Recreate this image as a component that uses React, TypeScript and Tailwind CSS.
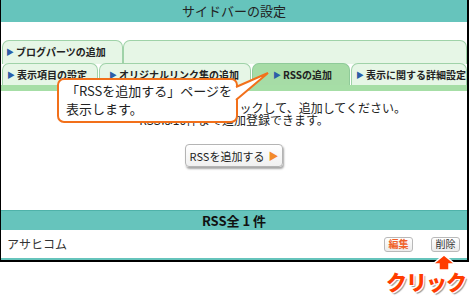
import React from 'react'

const FONT = '"Noto Sans CJK JP", "Noto Sans", sans-serif'

function Tab({ label, active, className = '' }: { label?: string; active?: boolean; className?: string }) {
  return (
    <div
      className={`flex items-center h-full rounded-t-[7px] border border-b-0 ${
        active ? 'bg-[#a6dca6] border-[#8fcb99]' : 'bg-[#e6f6e6] border-[#9fd2a8]'
      } ${className}`}
    >
      {label && (
        <span className="flex items-center text-[10px] font-bold text-[#222] leading-none pl-[3px] whitespace-nowrap">
          <span className="text-[#2b5ea8] text-[8px] mr-[2px]">▶</span>
          {label}
        </span>
      )}
    </div>
  )
}

function SmallBtn({ label, orange }: { label: string; orange?: boolean }) {
  return (
    <div
      className={`w-[29px] h-[15px] flex items-center justify-center rounded-[3px] border border-[#b9b9b9] bg-gradient-to-b from-white to-[#ececec] text-[10px] leading-none ${
        orange ? 'text-[#f0622a] font-bold' : 'text-[#333]'
      }`}
    >
      {label}
    </div>
  )
}

export default function App() {
  return (
    <div className="relative w-[470px] h-[297px] bg-white overflow-hidden" style={{ fontFamily: FONT }}>
      <div className="w-[469px] h-[262px] border-l border-r-2 border-b-2 border-black flex flex-col">
        {/* title */}
        <div className="h-[22px] bg-[#66c4bc] flex items-center justify-center text-[13px] text-[#222] shrink-0">
          サイドバーの設定
        </div>
        <div className="h-[18px] shrink-0" />

        {/* tabs row 1 */}
        <div className="h-[24px] flex pl-[1px] pr-0 shrink-0">
          <Tab label="ブログパーツの追加" className="w-[121px] pb-[2px]" />
          <Tab className="flex-1" />
        </div>
        {/* tabs row 2 */}
        <div className="h-[22px] flex pl-[1px] -mt-[1px] shrink-0">
          <Tab label="表示項目の設定" className="w-[96px] pl-[1px]" />
          <Tab label="オリジナルリンク集の追加" className="w-[152px] ml-[1px] pl-[6px]" />
          <Tab label="RSSの追加" active className="w-[98px] ml-[1px] pl-[17px]" />
          <Tab label="表示に関する詳細設定" className="flex-1 ml-[1px] pl-[1px]" />
        </div>
        <div className="h-[6px] bg-[#a6dea6] shrink-0" />

        {/* content */}
        <div className="flex-1 flex flex-col items-center pt-[11px] text-[12px] leading-[12px] text-[#222]">
          <div>「RSSを追加する」ボタンをクリックして、追加してください。</div>
          <div>RSSは10件まで追加登録できます。</div>
          <div className="mt-[18px] w-[98px] h-[23px] flex items-center justify-center gap-[4px] rounded-[4px] border border-[#b4b4b4] bg-gradient-to-b from-white to-[#f0f0f0] shadow-[1px_2px_2px_rgba(0,0,0,0.35)] text-[11px] whitespace-nowrap">
            <span>RSSを追加する</span>
            <span className="text-[#f28a2a] text-[10px]">▶</span>
          </div>
        </div>

        {/* count bar */}
        <div className="h-[20px] bg-[#66c4bc] border-t border-[#4fb2a9] flex items-center justify-center text-[13px] font-bold text-[#111] shrink-0">
          RSS全 1 件
        </div>
        <div className="h-[30px] flex items-center pl-[6px] pr-[7px] text-[12px] text-[#333] border-b-2 border-[#66c4bc] shrink-0">
          <span className="flex-1">アサヒコム</span>
          <SmallBtn label="編集" orange />
          <div className="w-[18px]" />
          <SmallBtn label="削除" />
        </div>
      </div>

      {/* callout */}
      <div className="absolute left-[57px] top-[78px] w-[181px] h-[45px] rounded-[7px] border-2 border-[#f2701a] bg-white pl-[7px] pt-[2px] text-[13px] leading-[18px] text-[#222]">
        <div>「RSSを追加する」ページを</div>
        <div>表示します。</div>
      </div>
      <svg className="absolute left-0 top-0" width="470" height="297" viewBox="0 0 470 297">
        <polygon points="235,88 268,73 235,100" fill="white" />
        <polyline points="236,87 268,73 236,100" fill="none" stroke="#f2701a" strokeWidth="2" strokeLinejoin="miter" />
        {/* click arrow */}
        <polygon
          points="444,255 455,264 449,264 449,270 439,270 439,264 433,264"
          fill="#ff3c00"
          stroke="white"
          strokeWidth="1.5"
        />
      </svg>

      <div
        className="absolute left-[386px] top-[271px] text-[21px] font-black text-[#ff3c00] leading-none tracking-[-1px]"
        style={{ textShadow: '-1px -1px 0 #fff, 1px -1px 0 #fff, -1px 1px 0 #fff, 1px 1px 0 #fff, 2px 2px 1px #999' }}
      >
        クリック
      </div>
    </div>
  )
}
